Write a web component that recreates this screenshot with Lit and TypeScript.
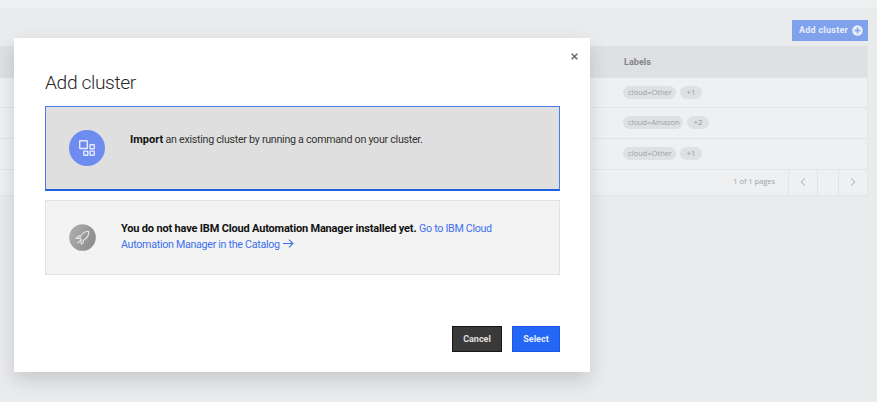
import { LitElement, html, css, svg } from "lit";
import { customElement } from "lit/decorators.js";

interface Row {
  label: string;
  more: string;
}

const rows: Row[] = [
  { label: "cloud=Other", more: "+1" },
  { label: "cloud=Amazon", more: "+2" },
  { label: "cloud=Other", more: "+1" },
];

@customElement("cluster-table")
class ClusterTable extends LitElement {
  static styles = css`
    :host { display: block; color: #9ea3a7; }
    .toolbar { display: flex; justify-content: flex-end; padding: 12px 9px 5px 0; }
    .add {
      display: flex; align-items: center; justify-content: space-between; box-sizing: border-box;
      width: 76px; height: 21px; padding: 0 5px 0 7px; border: 0; background: #80a2ed;
      color: #e8edf8; font: 700 9px/21px Roboto, sans-serif; letter-spacing: 0.25px; white-space: nowrap;
    }
    .add svg { width: 11px; height: 11px; flex: none; }
    .table { width: 867px; border-right: 1px solid #e4e6e8; background: #eff0f2; }
    .head {
      display: flex; align-items: center; height: 32px; padding-left: 624px;
      background: #dfe0e2; color: #7f8588; font: 700 9px/12px Roboto, sans-serif; letter-spacing: 0.05px;
    }
    .row {
      display: flex; align-items: center; gap: 4px; box-sizing: border-box; height: 31px;
      padding: 0 0 1px 623px; border-bottom: 1px solid #e2e4e6;
    }
    .row:nth-child(2) { height: 30px; }
    .row:nth-child(4) { padding-bottom: 2px; }
    .tag {
      box-sizing: border-box; height: 13px; padding: 0 5px; border-radius: 7px; background: #dde1e4;
      font: 400 7.7px/12px "Open Sans", sans-serif; white-space: nowrap;
    }
    .wide { width: 53px; letter-spacing: -0.1px; }
    .wider { width: 60px; letter-spacing: -0.15px; }
    .more { width: 22px; padding: 0; text-align: center; font-size: 8px; line-height: 12px; background: #dfe0e1; color: #94999c; }
    .pager { display: flex; height: 25px; justify-content: flex-end; border-bottom: 1px solid #e2e4e6; }
    .pages { padding-right: 13px; font: 400 7.6px/23px "Open Sans", sans-serif; letter-spacing: -0.08px; }
    .cell { display: flex; align-items: center; justify-content: center; box-sizing: border-box; padding-bottom: 1px; border-left: 1px solid #e2e4e6; }
    .arrow { width: 29px; }
    .blank { width: 21px; }
    .cell svg { width: 6px; height: 8px; fill: none; stroke: #a5a8ab; stroke-width: 1; }
  `;
  render() {
    return html`
      <div class="toolbar">
        <button class="add">Add cluster
          <svg viewBox="0 0 11 11"><circle cx="5.5" cy="5.5" r="5.3" fill="#e8edf8" /><path d="M5.5 2.6v5.8M2.6 5.5h5.8" stroke="#80a2ed" stroke-width="1.5" /></svg>
        </button>
      </div>
      <div class="table">
        <div class="head">Labels</div>
        ${rows.map((r) => html`<div class="row">
          <span class="tag ${r.label.length > 11 ? "wider" : "wide"}">${r.label}</span>
          <span class="tag more">${r.more}</span>
        </div>`)}
        <div class="pager">
          <span class="pages">1 of 1 pages</span>
          <span class="cell arrow"><svg viewBox="0 0 6 8"><path d="M5 .5 1 4l4 3.5" /></svg></span>
          <span class="cell blank"></span>
          <span class="cell arrow"><svg viewBox="0 0 6 8"><path d="M1 .5 5 4 1 7.5" /></svg></span>
        </div>
      </div>`;
  }
}

const blocksIcon = svg`<svg viewBox="0 0 36 36" width="36" height="36">
  <circle cx="18" cy="18" r="18" fill="#6e8cf0" />
  <g fill="none" stroke="#e6ebfd" stroke-width="1.4">
    <rect x="10.7" y="10.7" width="7.6" height="7.8" rx=".5" />
    <rect x="21" y="14.8" width="4.3" height="4" rx=".4" />
    <rect x="14.8" y="21.1" width="4" height="4.1" rx=".4" />
    <rect x="21" y="21.1" width="4.3" height="4.1" rx=".4" />
  </g></svg>`;

const rocketIcon = svg`<svg viewBox="0 0 27 27" width="27" height="27">
  <defs><linearGradient id="g" x1="0" y1="0" x2="1" y2="0.4"><stop offset="0" stop-color="#b0b0b0" /><stop offset="1" stop-color="#8f8f8f" /></linearGradient></defs>
  <circle cx="13.5" cy="13.5" r="13.3" fill="url(#g)" />
  <path d="M10.7 14.2c1.5-4 4.2-6.6 9-6.9.3 4.2-1.8 7.4-5.6 9.2l.4 1.7-2.1 2-.7-3.3M12 12.1l-2-.3-3 2.6 3.7-.2 1.6 1.8-3.8 3.3" fill="none" stroke="#e4e4e4" stroke-width="1.15" stroke-linejoin="round" /></svg>`;

@customElement("add-cluster-dialog")
class AddClusterDialog extends LitElement {
  static styles = css`
    :host {
      display: flex; flex-direction: column; box-sizing: border-box; width: 576px; height: 334px;
      padding: 33px 30px 20px 31px; background: #fff; box-shadow: 0 8px 18px rgba(0, 0, 0, 0.15);
      font-family: Roboto, sans-serif; color: #171717;
    }
    .close { position: absolute; top: 15px; right: 12px; width: 7px; height: 7px; stroke: #656c76; stroke-width: 1.6; }
    h1 { margin: 0 0 12px; font: 300 19.2px/23px Roboto, sans-serif; letter-spacing: -0.38px; color: #252525; }
    .option { display: flex; box-sizing: border-box; border: 1px solid #e2e2e2; background: #f3f3f3; font-size: 10.7px; line-height: 16px; }
    .selected { height: 85px; margin-bottom: 9px; padding: 23px 0 0 23px; gap: 25px; border: 1px solid #4a7ce8; border-bottom: 2px solid #2060dc; background: #dfdfdf; color: #343434; }
    .import { padding-top: 2px; white-space: nowrap; letter-spacing: -0.28px; }
    .option b { color: #111; font-size: 11px; letter-spacing: 0; }
    .missing { height: 75px; padding: 23px 0 0 23px; gap: 25px; }
    .text { margin-top: -3px; white-space: nowrap; }
    .missing b { letter-spacing: -0.18px; }
    .link { color: #3d70ee; letter-spacing: -0.3px; }
    .go { width: 11px; height: 9px; margin-left: 1px; fill: none; stroke: #3d70ee; stroke-width: 1.1; }
    svg { flex: none; }
    .actions { display: flex; justify-content: flex-end; gap: 10px; margin-top: auto; }
    button { box-sizing: border-box; height: 26px; padding: 0; border: 1px solid #1c56e8; color: #e9effd; background: #2467f6; font: 700 9px/22px Roboto, sans-serif; width: 48px; }
    .cancel { width: 50px; color: #e0e0e0; background: #393939; border-color: #161616; }
  `;
  render() {
    return html`
      <svg class="close" viewBox="0 0 7 7"><path d="m.7.7 5.6 5.6M6.3.7.7 6.3" /></svg>
      <h1>Add cluster</h1>
      <div class="option selected">${blocksIcon}
        <div class="import"><b>Import</b> an existing cluster by running a command on your cluster.</div>
      </div>
      <div class="option missing">${rocketIcon}
        <div class="text"><b>You do not have IBM Cloud Automation Manager installed yet.</b>
          <span class="link">Go to IBM Cloud</span><br />
          <span class="link">Automation Manager in the Catalog</span>
          <svg class="go" viewBox="0 0 11 9"><path d="M0 4.5h10M6 .7l3.9 3.8L6 8.3" /></svg>
        </div>
      </div>
      <div class="actions"><button class="cancel">Cancel</button><button>Select</button></div>`;
  }
}

@customElement("app-root")
class AppRoot extends LitElement {
  static styles = css`
    :host { display: block; position: relative; box-sizing: border-box; height: 402px; overflow: hidden; background: #eaebed; border-top: 8px solid #eff0f2; }
    add-cluster-dialog { position: absolute; left: 14px; top: 30px; }
  `;
  render() {
    return html`<cluster-table></cluster-table><add-cluster-dialog></add-cluster-dialog>`;
  }
}
